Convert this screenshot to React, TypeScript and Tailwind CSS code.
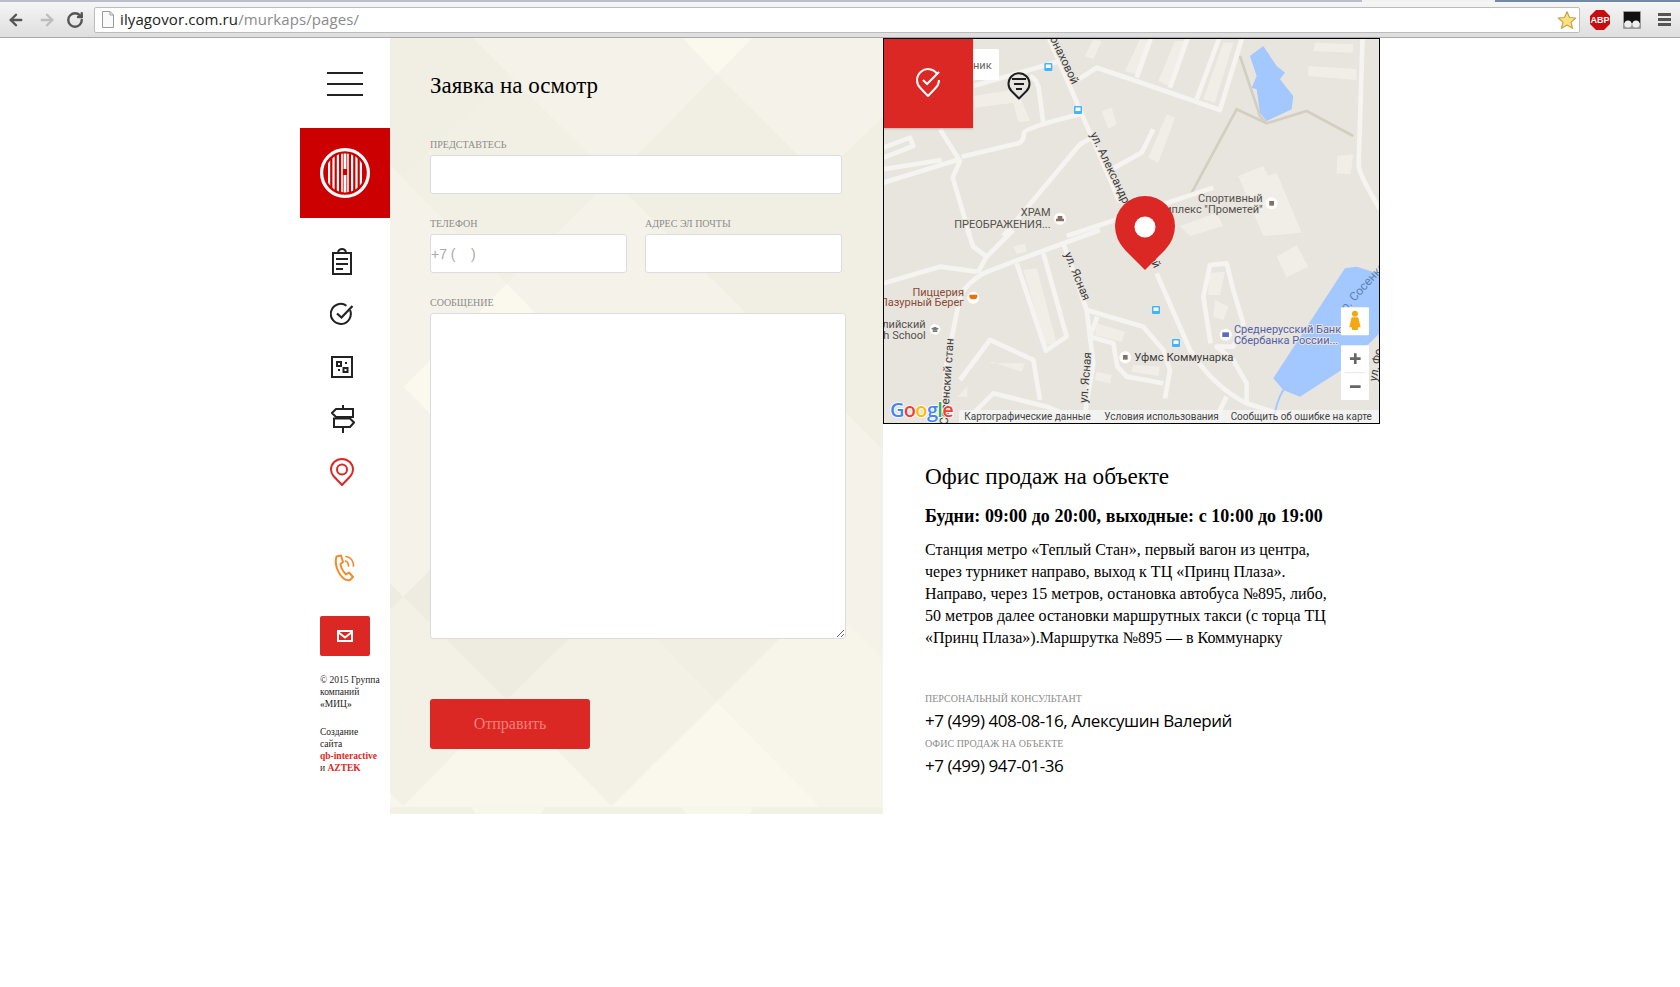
import React from 'react';
import { ArrowLeft, ArrowRight, RotateCw } from 'lucide-react';

// map roads, traced in 3x crop units: upper half and lower half of the map
const upperRoads = [
  'M500,-10 L720,500',
  'M280,150 L530,78',
  'M580,140 L650,95 L740,125 L1020,222 L1088,0',
  'M770,125 L815,0',
  'M870,155 L925,0',
  'M950,190 L1020,0',
  'M450,120 Q475,130 478,170 L490,262',
  'M245,362 L415,322 Q432,315 432,290 Q435,275 600,235',
  'M180,280 L240,375 L218,425 L270,600',
  'M10,440 L190,385 L240,370',
  'M10,400 L185,372',
  'M10,335 L90,305 L100,330 L10,365',
  'M370,600 L600,325 L645,300',
  'M695,400 L785,350 L820,280',
  'M560,600 L1000,455',
  'M1448,0 L1436,390 Q1440,420 1500,520',
];
const lowerRoads = [
  'M660,0 L400,95 L310,130 Q260,160 240,200 L200,400 L188,580',
  'M10,160 L180,110 L290,125',
  'M262,0 L280,50 L320,80 L292,130',
  'M400,0 L320,80',
  'M830,130 L930,360 Q1000,470 1100,520 L1240,565',
  'M550,40 L620,240 L640,400 L610,580',
  'M620,240 L790,290 L850,360 L870,420 L855,505',
  'M652,260 L630,320 L700,340 L712,410 L740,440 L850,460',
  'M490,70 L560,320 L498,362 L410,100',
  'M992,340 L970,200 L990,105 L1040,100 L1060,180 L1090,280 L1060,350 L1010,350 L1060,390 L1100,460 L1100,520',
  'M1040,500 L1000,580',
  'M240,450 L330,330 L460,390 L480,510',
  'M250,580 L340,490 L500,530 L600,570',
];

const upperBlocks = [
  '1075,420 1150,390 1165,420 1190,410 1265,590 1150,600',
  '665,225 695,215 710,265 685,278',
  '805,365 860,235 885,245 835,380',
  '900,570 1010,530 1030,570 930,600',
  '1305,20 1420,25 1418,50 1300,45',
  '1285,90 1430,100 1430,132 1285,120',
  '1372,360 1420,355 1412,415 1370,412',
  '735,105 780,10 810,15 770,115',
  '835,135 885,15 915,15 868,150',
  '970,190 1030,20 1060,20 1005,200',
  '615,60 640,10 665,15 640,70',
  '280,180 410,160 450,255 415,258 400,200 285,215',
];
const lowerBlocks = [
  '430,120 470,115 530,340 495,345',
  '232,500 330,400 435,400 425,425 335,395 262,470 262,500',
  '1190,80 1250,45 1285,110 1220,142',
  '650,280 735,305 725,335 645,315',
  '760,405 840,410 835,438 755,425',
  '985,130 1035,125 1020,195 985,195',
  '1005,210 1045,230 1030,270 1000,260',
  '400,50 435,40 440,65 410,72',
  '650,425 695,435 690,460 645,450',
];

const upperLabels: [number, number, string, string][] = [
  [1148, 498, 'Спортивный', '#55524d'],
  [1148, 530, 'комплекс "Прометей"', '#55524d'],
  [512, 541, 'ХРАМ', '#55524d'],
  [512, 576, 'ПРЕОБРАЖЕНИЯ...', '#55524d'],
];
const lowerLabels: [number, number, string, string][] = [
  [252, 197, 'Пиццерия', '#8a4b32'],
  [252, 229, 'Лазурный Берег', '#8a4b32'],
  [137, 293, 'Английский', '#55524d'],
  [137, 326, 'English School', '#55524d'],
];

const busStops: [number, number][] = [
  [880 + 505 / 3, 36 + 93 / 3],
  [880 + 594 / 3, 36 + 222 / 3],
  [880 + 828 / 3, 230 + 240 / 3],
  [880 + 888 / 3, 230 + 339 / 3],
];

const labelClass = 'block text-[10px] leading-[12px] uppercase text-[#8c8c8c]';
const fieldClass = 'block bg-white border border-[#dcdcdc] rounded-[3px] outline-none';

const Chrome = () => (
  <div className="h-[38px] border-b border-[#a9a9a9] bg-gradient-to-b from-[#f7f7f7] to-[#dedede] font-['Open_Sans',sans-serif]">
    <div className="flex h-[2px]">
      <div className="w-[1362px] bg-[#b9bfca]"></div>
      <div className="w-[133px] bg-[#f2f2f2]"></div>
      <div className="flex-1 bg-[#6f8aa8]"></div>
    </div>
    <div className="flex items-center h-[35px] pr-[9px]">
      <ArrowLeft className="ml-[7px] w-[18px] h-[18px] text-[#555]" strokeWidth={3.2} />
      <ArrowRight className="ml-[13px] w-[18px] h-[18px] text-[#bdbdbd]" strokeWidth={3.2} />
      <RotateCw className="ml-[10px] w-[18px] h-[18px] text-[#555]" strokeWidth={3.2} />
      <div className="ml-[10px] flex-1 h-[26px] bg-white border border-[#bcbcbc] rounded-[2px] flex items-center">
        <svg width="14" height="17" viewBox="0 0 14 17" className="ml-[6px]">
          <path d="M1.5 .5 H9 L12.5 4 V16.5 H1.5 Z M9 .5 V4 H12.5" fill="#fafafa" stroke="#9a9a9a" />
        </svg>
        <div className="ml-[5px] text-[15px] leading-none text-[#222] tracking-[0.1px]">
          ilyagovor.com.ru<span className="text-[#8a8a8a]">/murkaps/pages/</span>
        </div>
        <svg width="20" height="20" viewBox="0 0 24 24" className="ml-auto mr-[2px]">
          <path d="M12 2 L15 9 L22.5 9.6 L16.8 14.5 L18.6 22 L12 18 L5.4 22 L7.2 14.5 L1.5 9.6 L9 9 Z" fill="#fbe27c" stroke="#c9a04b" strokeWidth="1.4" strokeLinejoin="round" />
        </svg>
      </div>
      <svg width="20" height="20" viewBox="0 0 20 20" className="ml-[10px]">
        <path d="M6 0 H14 L20 6 V14 L14 20 H6 L0 14 V6 Z" fill="#c70d0d" />
        <text x="10" y="13.4" textAnchor="middle" fontSize="9" fontWeight="700" fill="#fff" fontFamily="Liberation Sans">ABP</text>
      </svg>
      <svg width="18" height="18" viewBox="0 0 18 18" className="ml-[13px]">
        <rect width="18" height="18" rx="1" fill="#9a9a9a" />
        <rect x="1" y="1" width="16" height="11" fill="#111" />
        <circle cx="5" cy="13" r="3.6" fill="#eee" />
        <circle cx="13" cy="13" r="3.6" fill="#eee" />
      </svg>
      <div className="ml-[17px] w-[13px] flex flex-col gap-[2px]">
        <div className="h-[3px] bg-[#555]"></div>
        <div className="h-[3px] bg-[#555]"></div>
        <div className="h-[3px] bg-[#555]"></div>
      </div>
    </div>
  </div>
);

const Logo = () => (
  <svg width="52" height="52" viewBox="-26 -26 52 52">
    <defs>
      <clipPath id="logo-clip"><circle r="19.5" /></clipPath>
    </defs>
    <circle r="23.4" fill="none" stroke="#fff" strokeWidth="3.2" />
    <g clipPath="url(#logo-clip)" fill="#fff">
      <rect x="-17" y="-20" width="2.2" height="40" />
      <rect x="-12.6" y="-20" width="2.2" height="40" />
      <rect x="-8.2" y="-20" width="2.2" height="40" />
      <rect x="-3.8" y="-20" width="1.6" height="40" />
      <rect x="-1.4" y="-20" width="2.8" height="16" />
      <rect x="-1.4" y="2" width="2.8" height="18" />
      <rect x="2.2" y="-20" width="1.6" height="40" />
      <rect x="6" y="-20" width="2.2" height="40" />
      <rect x="10.4" y="-20" width="2.2" height="40" />
      <rect x="14.8" y="-20" width="2.2" height="40" />
    </g>
  </svg>
);

const NavIcons = () => (
  <div className="mt-[18px] flex flex-col pr-[6px]">
    <div className="h-[52px] flex items-center justify-center">
      <svg width="22" height="28" viewBox="0 0 22 28" fill="none" stroke="#222" strokeWidth="2">
        <path d="M1 5 H21 M2 5 V26 H20 V5 M7 4 Q8 1 11 1 Q14 1 15 4" />
        <path d="M5 11 H17 M5 16 H17 M5 21 H12" />
      </svg>
    </div>
    <div className="h-[52px] flex items-center justify-center">
      <svg width="24" height="24" viewBox="0 0 24 24" fill="none" stroke="#222" strokeWidth="2">
        <path d="M20 8 A10 10 0 1 1 16.5 3.7" />
        <path d="M7 11.5 L11.5 15.5 L22.5 4" strokeWidth="2.2" />
      </svg>
    </div>
    <div className="h-[53px] flex items-center justify-center">
      <svg width="22" height="22" viewBox="0 0 22 22" fill="none" stroke="#222" strokeWidth="2">
        <rect x="1" y="1" width="20" height="20" />
        <rect x="6" y="6" width="4" height="4" />
        <rect x="12.5" y="12" width="4" height="4" />
        <path d="M14 7 H16 M7 14 H9" />
      </svg>
    </div>
    <div className="h-[52px] flex items-center justify-center pl-[2px]">
      <svg width="24" height="28" viewBox="0 0 24 28" fill="none" stroke="#222" strokeWidth="2">
        <path d="M12 0 V28" />
        <path d="M22 4 H5 L1 8 L5 12 H22 Z" fill="#fff" />
        <path d="M3 13.5 H19 L23 17.5 L19 22 H3 Z" fill="#fff" />
      </svg>
    </div>
    <div className="h-[53px] flex items-center justify-center">
      <svg width="24" height="28" viewBox="0 0 24 28" fill="none" stroke="#dc2825" strokeWidth="2">
        <path d="M12 27 L3.5 18 Q1 15 1 11.5 A11 10.500 0 0 1 23 11.5 Q23 15 20.5 18 Z" strokeLinejoin="round" />
        <circle cx="12" cy="11.5" r="5" />
      </svg>
    </div>
  </div>
);

const Sidebar = () => (
  <div className="w-[90px] shrink-0">
    <div className="h-[90px] pt-[2px] flex flex-col items-center justify-center gap-[9px]">
      <div className="w-[36px] h-[2px] bg-[#222]"></div>
      <div className="w-[36px] h-[2px] bg-[#222]"></div>
      <div className="w-[36px] h-[2px] bg-[#222]"></div>
    </div>
    <div className="h-[90px] bg-[#cc0000] flex items-center justify-center">
      <Logo />
    </div>
    <NavIcons />
    <div className="mt-[52px] h-[36px] flex items-center justify-center pr-[2px]">
      <svg width="22" height="28" viewBox="0 0 22 28" fill="none" stroke="#f58a2c" strokeWidth="2" strokeLinejoin="round" strokeLinecap="round">
        <path d="M3.500 2.500 L8 1.500 L10 8 L7.500 10 Q8 15 13 20.500 L16 18.500 L20 23 L17 26 Q12 27.500 7 20.500 Q1 11 3.500 2.500 Z" />
        <path d="M12.500 7 Q15.500 8 15.500 12 M13 2.500 Q20.500 4 20.500 12" strokeWidth="1.700" />
      </svg>
    </div>
    <div className="mt-[30px] ml-[20px] w-[50px] h-[40px] bg-[#dc2825] rounded-[2px] flex items-center justify-center">
      <svg width="16" height="12" viewBox="0 0 16 12" fill="none" stroke="#fff" strokeWidth="2">
        <rect x="1" y="1" width="14" height="10" />
        <path d="M1 2 L8 7.500 L15 2" />
      </svg>
    </div>
    <div className="mt-[18px] ml-[20px] text-[9.5px] leading-[12px] text-[#222]">
      <p>© 2015 Группа<br />компаний<br />«МИЦ»</p>
      <p className="mt-[16px]">
        Создание<br />сайта<br />
        <span className="font-bold text-[#dc2825]">qb-interactive</span><br />
        и <span className="font-bold text-[#dc2825]">AZTEK</span>
      </p>
    </div>
  </div>
);

const FormPattern = () => (
  <svg className="absolute inset-0 w-full h-full" viewBox="0 3 1479 2328" preserveAspectRatio="none">
    <rect x="0" y="0" width="1479" height="2340" fill="#f5f3e9" />
    <g>
      <polygon points="0,0 245,0 355,110 40,420 0,385" fill="#f1efe4" />
      <polygon points="355,110 600,355 740,355 620,470 350,740 0,385 40,420" fill="#f2f0e5" />
      <polygon points="875,0 1090,0 980,112" fill="#fbf9ee" />
      <polygon points="980,112 1290,420 1479,240 1479,610 1340,470 620,470 740,355" fill="#f1efe4" />
      <polygon points="710,470 1340,470 1479,610 1479,1239 1100,860" fill="#f1efe3" />
      <polygon points="350,740 435,828 265,828" fill="#fbf9ee" />
      <polygon points="40,1050 120,970 120,1130" fill="#fbf9ee" />
    </g>
    <g transform="translate(0 1149)">
      <polygon points="120,450 40,530 120,610" fill="#eeece0" />
      <polygon points="0,490 40,530 0,570" fill="#eeece0" />
      <polygon points="165,655 540,655 350,840" fill="#eeece0" />
      <polygon points="795,655 1170,655 980,845" fill="#f1efe3" />
      <polygon points="0,570 40,530 350,840 210,985 40,1155 0,1115" fill="#f3f1e6" />
      <polygon points="540,655 795,655 980,845 665,1155 495,985 350,840" fill="#f3f1e6" />
      <polygon points="40,1160 210,985 495,985 665,1160" fill="#f9f7eb" />
      <polygon points="665,1160 980,845 1290,1160" fill="#faf8ec" />
      <polygon points="980,845 1170,655 1365,600 1479,715 1479,1160 1290,1160" fill="#f7f5ea" />
      <polygon points="0,1120 40,1160 0,1160" fill="#f9f7eb" />
      <rect x="0" y="1162" width="1479" height="25" fill="#f3f1e6" />
      <polygon points="245,1162 465,1162 450,1187 260,1187" fill="#f9f7eb" />
      <polygon points="875,1162 1090,1162 1075,1187 890,1187" fill="#f9f7eb" />
    </g>
  </svg>
);

const RequestForm = () => (
  <div className="relative w-[493px] h-[776px] shrink-0">
    <FormPattern />
    <form className="relative pl-[40px] pt-[33px]">
      <h2 className="text-[23px] leading-[30px] text-black">Заявка на осмотр</h2>
      <label className={`${labelClass} mt-[38px]`}>Представтесь</label>
      <input className={`${fieldClass} mt-[4px] w-[412px] h-[39px]`} />
      <div className="mt-[24px] flex gap-[18px]">
        <div>
          <label className={labelClass}>Телефон</label>
          <input
            placeholder="+7 (    )"
            className={`${fieldClass} mt-[4px] w-[197px] h-[39px] text-[14px] font-['Liberation_Sans',sans-serif] placeholder:text-[#a9a9a9]`}
          />
        </div>
        <div>
          <label className={labelClass}>Адрес эл почты</label>
          <input className={`${fieldClass} mt-[4px] w-[197px] h-[39px]`} />
        </div>
      </div>
      <label className={`${labelClass} mt-[24px]`}>Сообщение</label>
      <textarea className={`${fieldClass} mt-[4px] w-[416px] h-[326px]`}></textarea>
      <button type="button" className="mt-[60px] block w-[160px] h-[50px] bg-[#dc2825] rounded-[3px] text-[16px] text-[#f08078]">
        Отправить
      </button>
    </form>
  </div>
);

const haloText = { paintOrder: 'stroke', stroke: '#e8e5df', strokeWidth: 6, strokeLinejoin: 'round' } as const;

const MapView = () => (
  <div className="relative h-[386px] border border-black overflow-hidden bg-[#e8e5df]">
    <svg className="block w-full h-full" viewBox="884 39 495 384" fontFamily="Roboto, sans-serif">
      {/* upper half of the map */}
      <g transform="translate(880 36) scale(0.3333)">
        {upperBlocks.map((pts, i) => (
          <polygon key={i} points={pts} fill="#f1eee8" />
        ))}
        <path d="M1080,60 L1140,240 L1160,262 L1280,225 L1420,300 M930,480 L1070,220 L1160,262" fill="none" stroke="#d2cfc0" strokeWidth="8" />
        {upperRoads.map((d, i) => (
          <path key={i} d={d} fill="none" stroke="#f6f4f0" strokeWidth="14" strokeLinejoin="round" />
        ))}
        <polygon points="1110,60 1150,30 1190,90 1215,110 1200,130 1240,180 1235,220 1160,255 1140,230 1130,160 1115,155 1130,120" fill="#a3c7ff" />
        <text transform="translate(384 -256) rotate(64.500)" fontSize="35" fill="#3c3c3c" style={haloText}>ул. Александра Монаховой</text>
        <text transform="translate(630 295) rotate(64.500)" fontSize="35" fill="#3c3c3c" style={haloText}>ул. Александра Монаховой</text>
        {upperLabels.map(([x, y, t, c]) => (
          <text key={t} x={x} y={y} textAnchor="end" fontSize="33" fill={c} style={haloText}>{t}</text>
        ))}
        <circle cx="1175" cy="502" r="18" fill="#fff" />
        <rect x="1168" y="495" width="14" height="14" fill="#8a6d63" />
        <circle cx="540" cy="548" r="18" fill="#fff" />
        <path d="M528,556 V548 H533 V540 H547 V548 H552 V556 Z" fill="#8a6d63" />
      </g>
      {/* lower half of the map */}
      <g transform="translate(880 230) scale(0.3333)">
        {lowerBlocks.map((pts, i) => (
          <polygon key={i} points={pts} fill="#f1eee8" />
        ))}
        {lowerRoads.map((d, i) => (
          <path key={i} d={d} fill="none" stroke="#f6f4f0" strokeWidth="14" strokeLinejoin="round" />
        ))}
        <polygon points="1180,445 1395,115 1430,110 1510,135 1510,300 1385,420 1260,500 1210,480" fill="#a3c7ff" />
        <path d="M1210,480 Q1185,520 1180,585" fill="none" stroke="#a3c7ff" strokeWidth="6" />
        <text transform="translate(1398 245) rotate(-48)" fontSize="36" fill="#5d82ad">р. Сосенка</text>
        <text transform="translate(1490 455) rotate(-80)" fontSize="34" fill="#3c3c3c" style={haloText}>ул. Фо</text>
        <text transform="translate(553 72) rotate(68)" fontSize="35" fill="#3c3c3c" style={haloText}>ул. Ясная</text>
        <text transform="translate(621 520) rotate(-85)" fontSize="35" fill="#3c3c3c" style={haloText}>ул. Ясная</text>
        <text transform="translate(203 585) rotate(-86)" fontSize="35" fill="#3c3c3c" style={haloText}>Сосенский стан</text>
        {lowerLabels.map(([x, y, t, c]) => (
          <text key={t} x={x} y={y} textAnchor="end" fontSize="33" fill={c} style={haloText}>{t}</text>
        ))}
        <circle cx="280" cy="203" r="18" fill="#fff" />
        <path d="M268,194 H292 V200 Q290,208 280,208 Q270,208 268,200 Z" fill="#e8710a" />
        <circle cx="165" cy="298" r="16" fill="#fff" />
        <path d="M153,296 L165,290 L177,296 L165,302 Z M158,301 V306 H172 V301" fill="#777" />
        <circle cx="736" cy="382" r="18" fill="#fff" />
        <rect x="729" y="375" width="14" height="14" fill="#8a6d63" />
        <text x="763" y="393" fontSize="34" fill="#3c3c3c" style={haloText}>Уфмс Коммунарка</text>
        <circle cx="1037" cy="314" r="18" fill="#fff" />
        <rect x="1027" y="307" width="20" height="14" fill="#5c6bc0" />
        <text x="1062" y="308" fontSize="33" fill="#5560a8" style={haloText}>Среднерусский Банк</text>
        <text x="1062" y="342" fontSize="33" fill="#5560a8" style={haloText}>Сбербанка России...</text>

        {/* attribution strip and logo */}
        <rect x="237" y="540" width="1263" height="45" fill="#f5f5f5" fillOpacity="0.75" />
        <text x="253" y="570" fontSize="30" fill="#444">Картографические данные</text>
        <text x="673" y="570" fontSize="30" fill="#444">Условия использования</text>
        <text x="1052" y="570" fontSize="30" fill="#444">Сообщить об ошибке на карте</text>
        <text x="30" y="561" fontSize="60" fontWeight="600" fontFamily="Open Sans, sans-serif" letterSpacing="-2" style={{ paintOrder: 'stroke', stroke: '#fff', strokeWidth: 5 }}>
          <tspan fill="#4285f4">G</tspan><tspan fill="#ea4335">o</tspan><tspan fill="#fbbc05">o</tspan><tspan fill="#4285f4">g</tspan><tspan fill="#34a853">l</tspan><tspan fill="#ea4335">e</tspan>
        </text>

        {/* pegman and zoom buttons */}
        <rect x="1383" y="232" width="84" height="84" rx="3" fill="#fff" />
        <circle cx="1425" cy="251" r="9" fill="#f3a712" />
        <path d="M1415,262 H1435 L1442,292 H1435 L1433,300 H1417 L1415,292 H1408 Z" fill="#f3a712" />
        <rect x="1383" y="346" width="84" height="164" rx="3" fill="#fff" />
        <path d="M1395,428 H1455" stroke="#e6e6e6" strokeWidth="3" />
        <path d="M1410,386 H1442 M1426,370 V402 M1410,470 H1442" stroke="#666" strokeWidth="8" />
      </g>
      {busStops.map(([x, y], i) => (
        <g key={i}>
          <rect x={x - 4} y={y - 4} width="8" height="8" rx="1" fill="#3fb5ff" />
          <rect x={x - 2.500} y={y - 2.500} width="5" height="3.500" fill="#fff" />
        </g>
      ))}
      {/* white label peeking from under the red square */}
      <rect x="960" y="49" width="39" height="31" rx="1.500" fill="#fff" />
      <text x="973" y="69" fontSize="11" fill="#666">ник</text>
      {/* small black marker */}
      <path d="M1019 98.500 L1011.500 91 A10.500 10.500 0 1 1 1026.500 91 Z" fill="#e8e5df" stroke="#1e1e1e" strokeWidth="2" strokeLinejoin="round" />
      <path d="M1012 79 H1026 M1014 84 H1024 M1016 89 H1022" stroke="#1e1e1e" strokeWidth="2" />
      {/* main pin */}
      <path d="M1145 270 L1125 250 Q1115 239 1115 226 A30 30 0 0 1 1175 226 Q1175 239 1165 250 Z" fill="#dc2825" />
      <circle cx="1145" cy="227" r="10.500" fill="#fff" />
    </svg>
    <div className="absolute -left-px -top-px w-[90px] h-[90px] bg-[#dc2825] flex items-center justify-center shadow-[0_1px_2px_rgba(0,0,0,0.2)]">
      <svg width="26" height="30" viewBox="0 0 26 30" fill="none" stroke="#fff" strokeWidth="2">
        <path d="M22 5.700 A11 11 0 1 0 5.200 19.800 L13 28 L20.800 19.800 A11 11 0 0 0 24 12" strokeLinejoin="round" />
        <path d="M8 12 L12 16 L24 4" />
      </svg>
    </div>
  </div>
);

const OfficeInfo = () => (
  <div className="pl-[42px] text-black">
    <h2 className="mt-[37px] text-[23.2px] leading-[30px]">Офис продаж на объекте</h2>
    <p className="mt-[13px] text-[18px] leading-[24px] font-bold tracking-[0.04px]">Будни: 09:00 до 20:00, выходные: с 10:00 до 19:00</p>
    <p className="mt-[11px] text-[16px] leading-[22px]">
      Станция метро «Теплый Стан», первый вагон из центра,<br />
      через турникет направо, выход к ТЦ «Принц Плаза».<br />
      Направо, через 15 метров, остановка автобуса №895, либо,<br />
      50 метров далее остановки маршрутных такси (с торца ТЦ<br />
      «Принц Плаза»).Маршрутка №895 — в Коммунарку
    </p>
    <div className={`${labelClass} mt-[44px]`}>Персональный консультант</div>
    <div className="mt-[3px] text-[17px] leading-[26px] tracking-[-0.45px] font-['Open_Sans',sans-serif]">+7 (499) 408-08-16, Алексушин Валерий</div>
    <div className={`${labelClass} mt-[4px]`}>Офис продаж на объекте</div>
    <div className="mt-[3px] text-[17px] leading-[26px] tracking-[-0.45px] font-['Open_Sans',sans-serif]">+7 (499) 947-01-36</div>
  </div>
);

const App = () => (
  <div className="min-h-[987px] bg-white font-['Liberation_Serif',serif]">
    <Chrome />
    <div className="mx-auto w-[1080px] flex">
      <Sidebar />
      <RequestForm />
      <div className="flex-1">
        <MapView />
        <OfficeInfo />
      </div>
    </div>
  </div>
);

export default App;
